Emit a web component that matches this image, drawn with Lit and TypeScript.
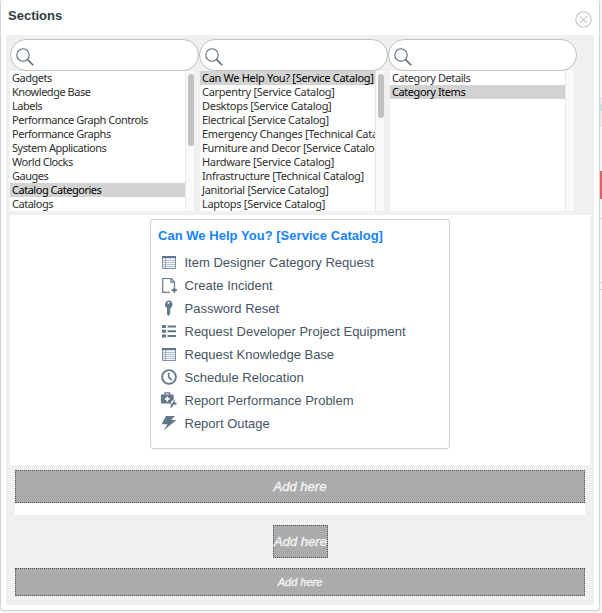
import { LitElement, html, css, svg } from "lit";
import { customElement, property } from "lit/decorators.js";
import { classMap } from "lit/directives/class-map.js";

const icons: Record<string, unknown> = {
  table: svg`<path d="M1.5 2.5h13v12h-13z" fill="#f7fafc" stroke="#7f8fa3"/><path d="M1 2h14v2.2H1z" fill="#5f7490"/><path d="M2 6.5h12M2 8.5h12M2 10.5h12M2 12.5h12" stroke="#b4bfcd"/><path d="M4.5 4v10" stroke="#9aa8ba"/>`,
  document: svg`<path d="M9 15.3H1.7V1.5h8.6l3.2 3.4v5.5M10 1.8v3.3h3.2" fill="none" stroke="#66788c" stroke-width="1.2"/><path d="M13.3 10.6v5.2M10.7 13.2h5.2" stroke="#5d7185" stroke-width="1.8"/>`,
  key: svg`<path fill-rule="evenodd" d="M7.5 .6a3.9 3.9 0 0 1 2.1 7.2v1.4l-.9.8.9.9-.9 1 .9 1-.9 1v.7l-1.2 1.5-1.5-1.5V7.9A3.9 3.9 0 0 1 7.5.6zm0 1.2a1 1 0 1 0 0 2 1 1 0 0 0 0-2z" fill="#63788c"/>`,
  list: svg`<path d="M1 2h4v3H1zM1 6.7h4v3H1zM1 11.4h4v3H1zM6.5 2.5H15v2H6.5zM6.5 7.2H15v2H6.5zM6.5 11.9H15v2H6.5z" fill="#63758a"/>`,
  clock: svg`<circle cx="8" cy="8" r="6.9" fill="none" stroke="#63768a" stroke-width="1.9"/><path d="M7.7 3.8v4.4l3.2 3" fill="none" stroke="#63768a" stroke-width="1.6"/>`,
  kit: svg`<path d="M4 3V.9h4.6V3" fill="none" stroke="#63768a" stroke-width="1.4"/><path d="M.8 2.6h11a.9.9 0 0 1 .9.9v4.2l-2.4 1.8-.6 1.9H.8a.9.9 0 0 1-.9-.9v-7a.9.9 0 0 1 .9-.9z" fill="#63768a"/><path d="M6.3 4.4v5M3.8 6.9h5" stroke="#fff" stroke-width="1.6"/><path d="M13.6 8v2.6l2.2.9-1.6 1-1.9.2-1.4 2.6-1.4-.4 1-2.2-1.2-.9h2z" fill="#63768a" stroke="#63768a" stroke-width=".5"/>`,
  bolt: svg`<path d="M5 1h8.8L10.3 4.9h5.2L2.8 15.2l3.6-6H.5z" fill="#63778b"/>`,
};

@customElement("section-picker")
class SectionPicker extends LitElement {
  @property({ type: Array }) options: string[] = [];
  @property({ type: Number }) selected = -1;
  @property({ type: Number }) thumb = 0;
  @property({ type: Number }) inset = 0;
  @property({ type: Number }) tracking = 0;

  static styles = css`
    :host { display: block; width: 189px; }
    .search { box-sizing: border-box; width: 189px; height: 32px; border: 1px solid #bdc0c4; border-radius: 16px; background: #fff; padding: 8px 0 0 5px; }
    .search svg { display: block; width: 18px; height: 18px; }
    .box { display: flex; width: 185px; height: 140px; background: #fff; }
    .options { width: 175px; overflow: hidden; font: 11px/14px "Noto Sans", sans-serif; color: #2e2e2e; }
    .option { height: 14px; padding-left: 2px; white-space: nowrap; }
    .text { display: inline-block; }
    .chosen { background: #d3d3d3; color: #000; }
    .track { box-sizing: border-box; width: 10px; border-left: 1px solid #e8e8e8; border-right: 1px solid #eee; background: #fafafa; padding: 3px 0 0 2px; }
    .thumb { width: 6px; border-radius: 3px; background: #c1c1c1; }
  `;

  render() {
    return html`
      <div class="search">
        <svg viewBox="0 0 18 18" fill="none" stroke="#5c6a7a"><circle cx="7" cy="7" r="6.2" stroke-width="1.1" /><path d="M11.6 11.6l5.6 5.6" stroke-width="1.6" /></svg>
      </div>
      <div class="box" style="margin-left:${this.inset}px">
        <div class="options" style="letter-spacing:${this.tracking}px">
          ${this.options.map((o, i) => html`<div class=${classMap({ option: true, chosen: i === this.selected })}><span class="text">${o}</span></div>`)}
        </div>
        <div class="track">${this.thumb ? html`<div class="thumb" style="height:${this.thumb}px"></div>` : null}</div>
      </div>
    `;
  }
}

@customElement("app-root")
class AppRoot extends LitElement {
  static styles = css`
    :host { display: flex; width: 602px; height: 613px; background: #f4f4f4; font-family: "Liberation Sans", Arial, sans-serif; overflow: hidden; }
    .dialog { box-sizing: border-box; width: 600px; height: 611px; border: 1px solid #d2d2d2; border-top: 0; border-radius: 3px 3px 4px 4px; background: #fff; padding: 0 5px; }
    .head { display: flex; justify-content: space-between; height: 35px; }
    .title { margin: 8px 0 0 2px; font: bold 13px/16px "Liberation Sans", Arial, sans-serif; color: #343d47; }
    .close { width: 17px; height: 17px; margin: 11px 2px 0 0; }
    .panel { box-sizing: border-box; height: 570px; background: #f0f0f0; padding: 4px 4px 0; }
    .pickers { display: flex; height: 176px; }
    .preview { box-sizing: border-box; height: 250px; background: #fff; padding: 4px 0 0 140px; }
    .card { box-sizing: border-box; width: 300px; height: 230px; border: 1px solid #d0d0d0; border-radius: 3px; padding: 7px; }
    .cardtitle { height: 24px; font: bold 13px/18px "Liberation Sans", Arial, sans-serif; letter-spacing: 0.03px; color: #1683fb; white-space: nowrap; }
    .item { display: flex; align-items: center; height: 23px; font-size: 13px; color: #455464; white-space: nowrap; }
    .item svg { width: 16px; height: 16px; margin: 0 7.5px 1px 3px; overflow: visible; }
    .add { box-sizing: border-box; display: flex; align-items: center; justify-content: center; height: 33px; border: 1px dotted #555; background: #ababab; color: #f0f0f0; font: italic 13px/16px "Liberation Sans", Arial, sans-serif; -webkit-text-stroke: 0.45px #f0f0f0; white-space: nowrap; }
    .drop { margin: 5px 5px 10px; padding-bottom: 12px; background: #fff; }
    .middle { width: 55px; margin: 0 auto 10px; position: relative; left: 0.5px; }
    .foot { height: 28px; margin: 0 5px; font-size: 11px; }
    .behind { width: 2px; height: 613px; display: flex; flex-direction: column; }
    .gap1 { height: 97px; }
    .tint { height: 30px; background: #e7e7ec; }
    .mark { height: 7px; margin-top: 7px; background: #c3dfe8; }
    .gap2 { height: 44px; }
    .red { height: 28px; background: #df6063; }
    .line { height: 1px; margin-top: 19px; background: #d4d4d4; }
    .far { margin-top: 63px; }
    .near { margin-top: 6px; }
  `;

  private gadgets = ["Gadgets", "Knowledge Base", "Labels", "Performance Graph Controls", "Performance Graphs", "System Applications", "World Clocks", "Gauges", "Catalog Categories", "Catalogs"];
  private categories = ["Can We Help You? [Service Catalog]", "Carpentry [Service Catalog]", "Desktops [Service Catalog]", "Electrical [Service Catalog]", "Emergency Changes [Technical Catalog]", "Furniture and Decor [Service Catalog]", "Hardware [Service Catalog]", "Infrastructure [Technical Catalog]", "Janitorial [Service Catalog]", "Laptops [Service Catalog]"];
  private items: [string, string][] = [
    ["table", "Item Designer Category Request"],
    ["document", "Create Incident"],
    ["key", "Password Reset"],
    ["list", "Request Developer Project Equipment"],
    ["table", "Request Knowledge Base"],
    ["clock", "Schedule Relocation"],
    ["kit", "Report Performance Problem"],
    ["bolt", "Report Outage"],
  ];

  render() {
    return html`
      <div class="dialog">
        <div class="head">
          <div class="title">Sections</div>
          <svg class="close" viewBox="0 0 17 17" fill="none" stroke="#bfc1c4" stroke-width="1.1"><circle cx="8.5" cy="8.5" r="7.7" /><path d="M4.8 4.8l7.4 7.4M12.2 4.8l-7.4 7.4" /></svg>
        </div>
        <div class="panel">
          <div class="pickers">
            <section-picker .options=${this.gadgets} .selected=${8} .thumb=${72} .tracking=${-0.48}></section-picker>
            <section-picker .options=${this.categories} .selected=${0} .thumb=${44} .inset=${1} .tracking=${-0.3}></section-picker>
            <section-picker .options=${["Category Details", "Category Items"]} .selected=${1} .inset=${2} .tracking=${-0.42}></section-picker>
          </div>
          <div class="preview">
            <div class="card">
              <div class="cardtitle"><span>Can We Help You? [Service Catalog]</span></div>
              ${this.items.map(([icon, label]) => html`<div class="item"><svg viewBox="0 0 16 16">${icons[icon]}</svg><span>${label}</span></div>`)}
            </div>
          </div>
          <div class="drop"><div class="add">Add here</div></div>
          <div class="add middle">Add here</div>
          <div class="add foot">Add here</div>
        </div>
      </div>
      <div class="behind">
        <div class="gap1"></div>
        <div class="tint"><div class="mark"></div></div>
        <div class="gap2"></div>
        <div class="red"></div>
        <div class="line"></div>
        <div class="line far"></div>
        <div class="line near"></div>
      </div>
    `;
  }
}
